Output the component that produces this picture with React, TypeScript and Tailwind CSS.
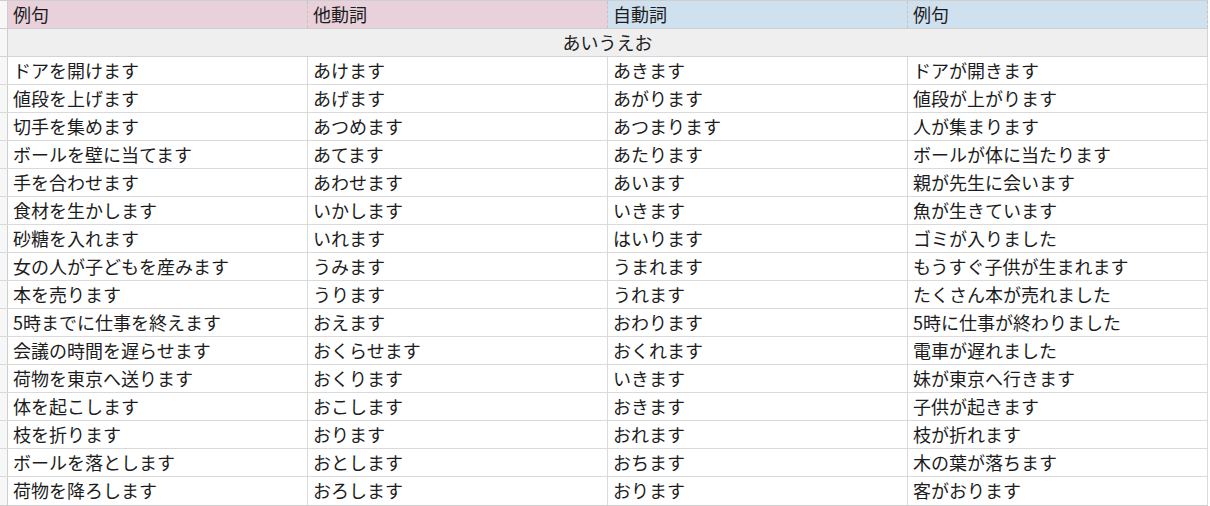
import React from 'react'

const rows: string[][] = [
  ['ドアを開けます', 'あけます', 'あきます', 'ドアが開きます'],
  ['値段を上げます', 'あげます', 'あがります', '値段が上がります'],
  ['切手を集めます', 'あつめます', 'あつまります', '人が集まります'],
  ['ボールを壁に当てます', 'あてます', 'あたります', 'ボールが体に当たります'],
  ['手を合わせます', 'あわせます', 'あいます', '親が先生に会います'],
  ['食材を生かします', 'いかします', 'いきます', '魚が生きています'],
  ['砂糖を入れます', 'いれます', 'はいります', 'ゴミが入りました'],
  ['女の人が子どもを産みます', 'うみます', 'うまれます', 'もうすぐ子供が生まれます'],
  ['本を売ります', 'うります', 'うれます', 'たくさん本が売れました'],
  ['5時までに仕事を終えます', 'おえます', 'おわります', '5時に仕事が終わりました'],
  ['会議の時間を遅らせます', 'おくらせます', 'おくれます', '電車が遅れました'],
  ['荷物を東京へ送ります', 'おくります', 'いきます', '妹が東京へ行きます'],
  ['体を起こします', 'おこします', 'おきます', '子供が起きます'],
  ['枝を折ります', 'おります', 'おれます', '枝が折れます'],
  ['ボールを落とします', 'おとします', 'おちます', '木の葉が落ちます'],
  ['荷物を降ろします', 'おろします', 'おります', '客がおります'],
]

const font = { fontFamily: '"Noto Sans CJK JP", "Noto Sans", sans-serif' }

export default function App() {
  return (
    <div className="w-[1210px] h-[506px] bg-white text-[#1c1c1c] text-[18px] leading-none overflow-hidden" style={font}>
      <div className="w-[1208px] border-t border-[#cfcfcf] border-b">
        {/* Header */}
        <div className="grid grid-cols-[8px_300px_300px_300px_300px] h-[28px] border-b border-[#cfcfcf]">
          <div className="bg-[#f7f7f7] border-r border-[#cfcfcf]" />
          <div className="bg-[#e8d1da] border-r border-dashed border-[#c4c4c4] flex items-center px-[5px] pb-[2px]">例句</div>
          <div className="bg-[#e8d1da] border-r border-dashed border-[#c4c4c4] flex items-center px-[5px] pb-[2px]">他動詞</div>
          <div className="bg-[#cfe0ef] border-r border-dashed border-[#c4c4c4] flex items-center px-[5px] pb-[2px]">自動詞</div>
          <div className="bg-[#cfe0ef] border-r border-dashed border-[#c4c4c4] flex items-center px-[5px] pb-[2px]">例句</div>
        </div>
        {/* Group row */}
        <div className="grid grid-cols-[8px_1200px] h-[28px] border-b border-[#d4d4d4]">
          <div className="bg-[#f7f7f7] border-r border-[#cfcfcf]" />
          <div className="bg-[#efefef] border-r border-[#d4d4d4] flex items-center justify-center pb-[2px]">あいうえお</div>
        </div>
        {rows.map((r, i) => (
          <div key={i} className="grid grid-cols-[8px_300px_300px_300px_300px] h-[28px] border-b border-[#dadada] last:border-b-0">
            <div className="bg-[#f7f7f7] border-r border-[#cfcfcf]" />
            {r.map((c, j) => (
              <div key={j} className="border-r border-[#dadada] flex items-center px-[5px] pb-[2px] whitespace-nowrap">
                {c}
              </div>
            ))}
          </div>
        ))}
      </div>
    </div>
  )
}
